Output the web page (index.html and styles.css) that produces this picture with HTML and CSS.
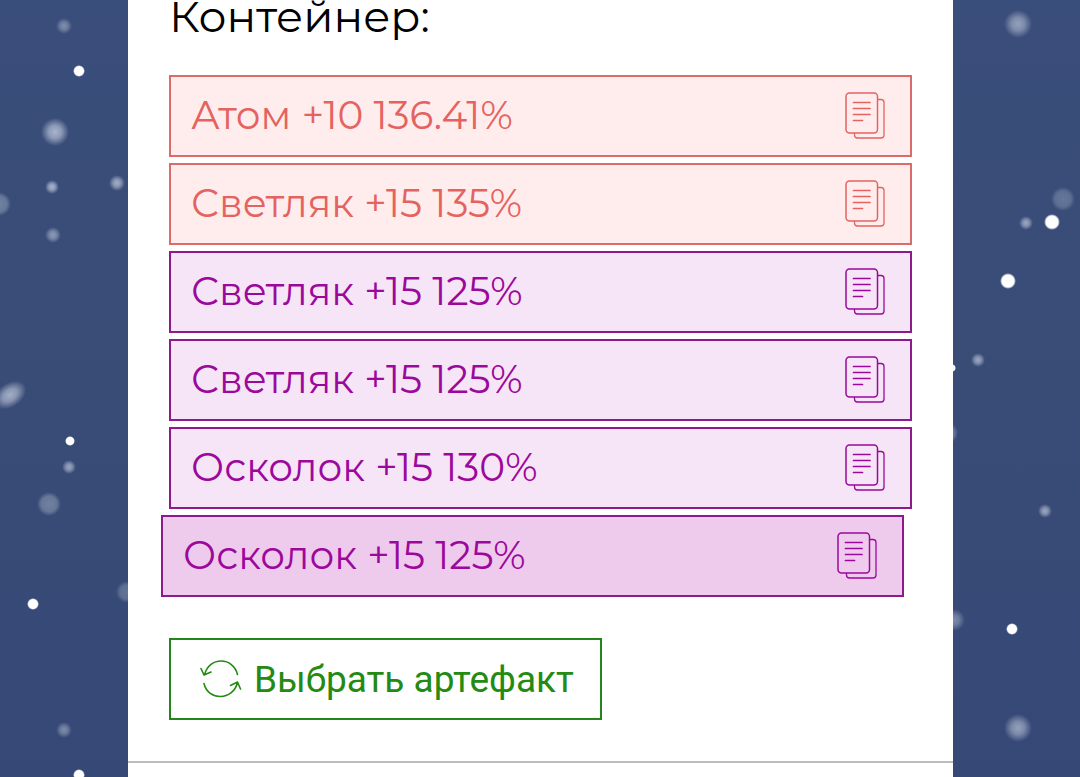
FILE: index.html
```html
<!DOCTYPE html>
<html lang="ru">
<head>
<meta charset="utf-8">
<meta name="viewport" content="width=device-width, initial-scale=1">
<title>Контейнер</title>
<link rel="stylesheet" href="styles.css">
</head>
<body>
<svg class="defs" aria-hidden="true">
  <defs>
    <radialGradient id="glow"><stop offset="0" stop-color="#c6cee0"/><stop offset=".45" stop-color="#c6cee0" stop-opacity=".75"/><stop offset="1" stop-color="#c6cee0" stop-opacity="0"/></radialGradient>
    <radialGradient id="haze"><stop offset="0" stop-color="#aab8ca"/><stop offset=".65" stop-color="#aab8ca" stop-opacity=".8"/><stop offset="1" stop-color="#aab8ca" stop-opacity="0"/></radialGradient>
    <radialGradient id="star"><stop offset="0" stop-color="#fff"/><stop offset=".75" stop-color="#fff"/><stop offset="1" stop-color="#fff" stop-opacity="0"/></radialGradient>
  </defs>
  <symbol id="copy" viewBox="0 0 40 48">
    <g fill="none" stroke="currentColor" stroke-linecap="round" stroke-linejoin="round">
      <rect x="1" y="2" width="31.500" height="40" rx="3.500" stroke-width="1.500"/>
      <path d="M33 8.500h3q3 0 3 3v32.500q0 3-3 3H12.500q-3 0-3-3v-1.500" stroke-width="1.300"/>
      <path d="M8.500 11.500h16.500M8.500 17.500h16.500M8.500 23.500h16.500M8.500 29.500h9" stroke-width="1.700"/>
    </g>
  </symbol>
</svg>
<div class="page">
  <div class="sky" aria-hidden="true">
    <svg class="snow">
      <g fill="url(#glow)">
        <circle cx="64" cy="26" r="8" opacity=".5"/><circle cx="55" cy="132" r="14" opacity=".8"/>
        <circle cx="52" cy="187" r="7" opacity=".8"/><circle cx="117" cy="183" r="8" opacity=".75"/>
        <circle cx="53" cy="235" r="8" opacity=".6"/>
        <ellipse cx="10" cy="395" rx="18" ry="12" transform="rotate(-35 10 395)" opacity=".75"/>
        <circle cx="69" cy="467" r="7" opacity=".7"/><circle cx="64" cy="730" r="8" opacity=".5"/>
      </g>
      <g fill="url(#haze)">
        <circle cx="-1" cy="204" r="12" opacity=".5"/><circle cx="49" cy="504" r="12" opacity=".5"/>
        <circle cx="127" cy="592" r="11" opacity=".4"/>
      </g>
      <g fill="url(#star)">
        <circle cx="79" cy="71" r="6"/><circle cx="70" cy="441" r="5"/><circle cx="33" cy="604" r="6"/><circle cx="79" cy="775" r="6"/>
      </g>
    </svg>
  </div>
  <main class="panel">
    <section class="container">
      <h1 class="title">Контейнер:</h1>
      <ul class="items">
        <li><button class="item item-red" type="button"><span>Атом +10 136.41%</span><svg class="copy" aria-hidden="true"><use href="#copy"/></svg></button></li>
        <li><button class="item item-red" type="button"><span>Светляк +15 135%</span><svg class="copy" aria-hidden="true"><use href="#copy"/></svg></button></li>
        <li><button class="item item-purple" type="button"><span>Светляк +15 125%</span><svg class="copy" aria-hidden="true"><use href="#copy"/></svg></button></li>
        <li><button class="item item-purple" type="button"><span>Светляк +15 125%</span><svg class="copy" aria-hidden="true"><use href="#copy"/></svg></button></li>
        <li><button class="item item-purple" type="button"><span>Осколок +15 130%</span><svg class="copy" aria-hidden="true"><use href="#copy"/></svg></button></li>
        <li class="active"><button class="item item-purple" type="button"><span>Осколок +15 125%</span><svg class="copy" aria-hidden="true"><use href="#copy"/></svg></button></li>
      </ul>
      <button class="choose" type="button">
        <svg class="refresh" viewBox="0 0 42 38" fill="none" stroke="currentColor" stroke-width="1.600" stroke-linecap="round" stroke-linejoin="round" aria-hidden="true">
          <path d="M37.500 14.500C33.500-3 9-4 4.500 15M1 8.500l3 6.500 7-3M4 23.500C8 41 33 41 37.500 22.500M30.500 25.500l7-3.500 3 7"/>
        </svg>
        <span>Выбрать артефакт</span>
      </button>
    </section>
  </main>
  <div class="sky" aria-hidden="true">
    <svg class="snow">
      <g fill="url(#glow)">
        <circle cx="65" cy="24" r="14" opacity=".65"/><circle cx="73" cy="223" r="7" opacity=".7"/>
        <circle cx="25" cy="360" r="7" opacity=".7"/><circle cx="92" cy="511" r="7" opacity=".7"/>
        <circle cx="1" cy="620" r="11" opacity=".5"/><circle cx="65" cy="728" r="14" opacity=".65"/>
      </g>
      <g fill="url(#haze)">
        <circle cx="110" cy="199" r="12" opacity=".4"/><circle cx="-6" cy="433" r="11" opacity=".5"/>
      </g>
      <g fill="url(#star)">
        <circle cx="99" cy="222" r="8"/><circle cx="55" cy="281" r="8"/><circle cx="-1" cy="368" r="4"/><circle cx="59" cy="629" r="6"/>
      </g>
    </svg>
  </div>
</div>
</body>
</html>
```
FILE: styles.css
```css
* {
  box-sizing: border-box;
}

body {
  margin: 0;
  background: #384b78;
  font-family: Montserrat, Inter, sans-serif;
}

.defs {
  position: absolute;
  width: 0;
  height: 0;
}

.page {
  display: grid;
  grid-template-columns: 128px 1fr 127px;
  min-height: 100vh;
}

.sky {
  position: relative;
  overflow: hidden;
  background: linear-gradient(#3a4e7b, #394c76 50%, #364876);
}

.snow {
  position: absolute;
  inset: 0;
  width: 100%;
  height: 100%;
}

.panel {
  background: #fff;
}

.container {
  padding: 0 41px 41px;
  border-bottom: 2px solid #bdbdbd;
}

.title {
  margin: 0;
  padding-bottom: 43px;
  color: #000;
  font-size: 44px;
  font-weight: 400;
  line-height: 32px;
}

.items {
  display: grid;
  gap: 6px;
  margin: 0 0 41px;
  padding: 0;
  list-style: none;
}

.item {
  display: flex;
  align-items: center;
  justify-content: space-between;
  width: 100%;
  height: 82px;
  padding: 0 25px 2px 20px;
  border: 2px solid;
  font-family: inherit;
  font-size: 39px;
  font-weight: 400;
  text-align: left;
}

.item-red {
  border-color: #dc6c69;
  background: #ffeded;
  color: #e46360;
}

.item-purple {
  border-color: #8c1a8c;
  background: #f6e5f7;
  color: #9c089c;
}

.active {
  margin: 0 8px 0 -8px;
}

.active .item {
  background: #eecbed;
}

.copy {
  width: 40px;
  height: 48px;
}

.choose {
  display: flex;
  align-items: center;
  gap: 12px;
  height: 82px;
  padding: 0 26px 0 29px;
  border: 2px solid #23861b;
  background: #fff;
  color: #238a12;
  font-family: Roboto, sans-serif;
  font-size: 37px;
}

.refresh {
  width: 42px;
  height: 38px;
}
```
